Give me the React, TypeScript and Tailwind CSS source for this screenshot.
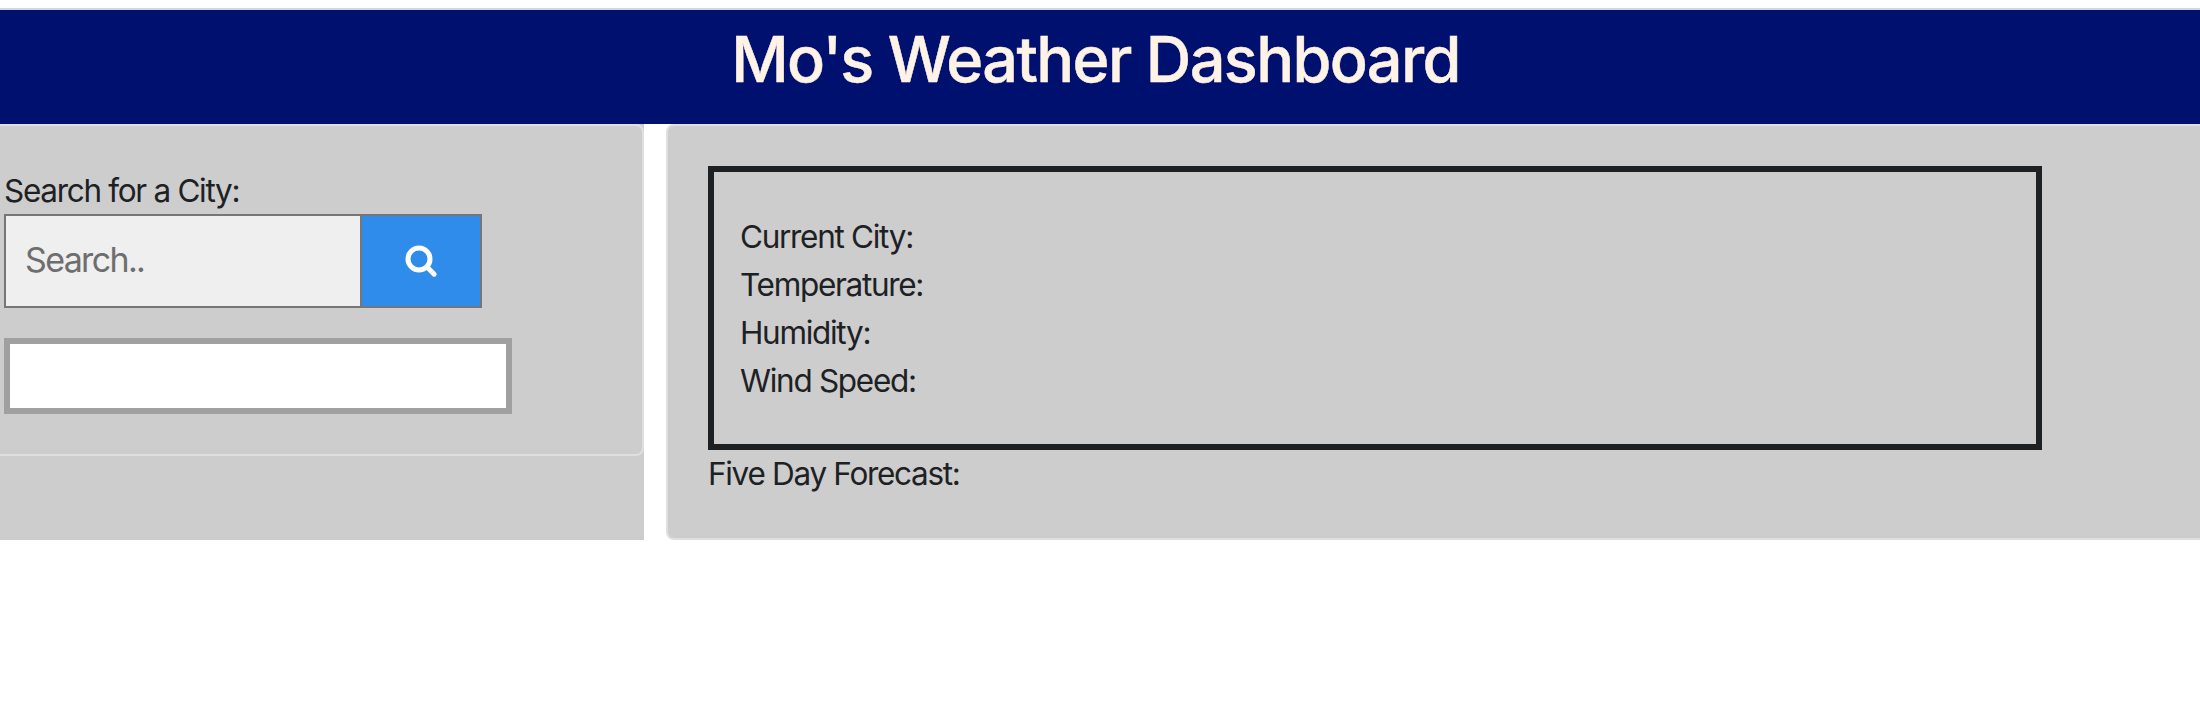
const metrics = ["Current City:", "Temperature:", "Humidity:", "Wind Speed:"];

function SearchIcon() {
  return (
    <svg width="33" height="33" viewBox="0 0 33 33" fill="none" stroke="white" aria-hidden="true">
      <circle cx="14" cy="14" r="11" strokeWidth="5" />
      <path d="M22.3 22.3 L29.2 29.2" strokeWidth="5" strokeLinecap="round" />
    </svg>
  );
}

export default function App() {
  return (
    <div className="min-h-[716px] bg-white pt-2 font-['Inter',sans-serif] text-[31.5px] leading-[48px] tracking-[-1.3px] text-[#1d2124]">
      <header className="h-[116px] border-t-2 border-[#d5d5df] bg-[#00106e] pr-[9px] pt-[11px] text-center">
        <h1 className="text-[63px] font-medium leading-[77px] tracking-[-1.62px] text-[#fef3e6] [-webkit-text-stroke:0.5px_#fef3e6]">Mo's Weather Dashboard</h1>
      </header>
      <main className="flex h-[416px] gap-[22px]">
        <aside className="w-[644px] bg-[#cdcdcd]">
          <div className="h-[332px] rounded-r-lg border-2 border-l-0 border-[#dfdfdf] pl-1 pt-[41px]">
            <p className="h-[47px]">Search for a City:</p>
            <form className="flex h-[94px] w-[478px] border-2 border-[#767676]">
              <input
                className="w-[356px] border-r-2 border-[#767676] bg-[#efefef] pb-[2px] pl-[19px] text-[34px] tracking-[-1.65px] outline-none placeholder:text-[#6e6e6e]"
                placeholder="Search.."
              />
              <button type="button" className="flex flex-1 items-center justify-center bg-[#2f8ceb]">
                <SearchIcon />
              </button>
            </form>
            <div className="mt-[30px] h-[76px] w-[508px] border-[6px] border-[#a0a0a0] bg-white" />
          </div>
        </aside>
        <section className="flex-1 rounded-l-lg border-2 border-r-0 border-[#dfdfdf] bg-[#cdcdcd] pl-10 pt-10">
          <div className="h-[284px] w-[1334px] border-[6px] border-[#1d2124] pl-[26px] pt-[41px]">
            {metrics.map((label) => (
              <p key={label}>{label}</p>
            ))}
          </div>
          <p>Five Day Forecast:</p>
        </section>
      </main>
    </div>
  );
}
